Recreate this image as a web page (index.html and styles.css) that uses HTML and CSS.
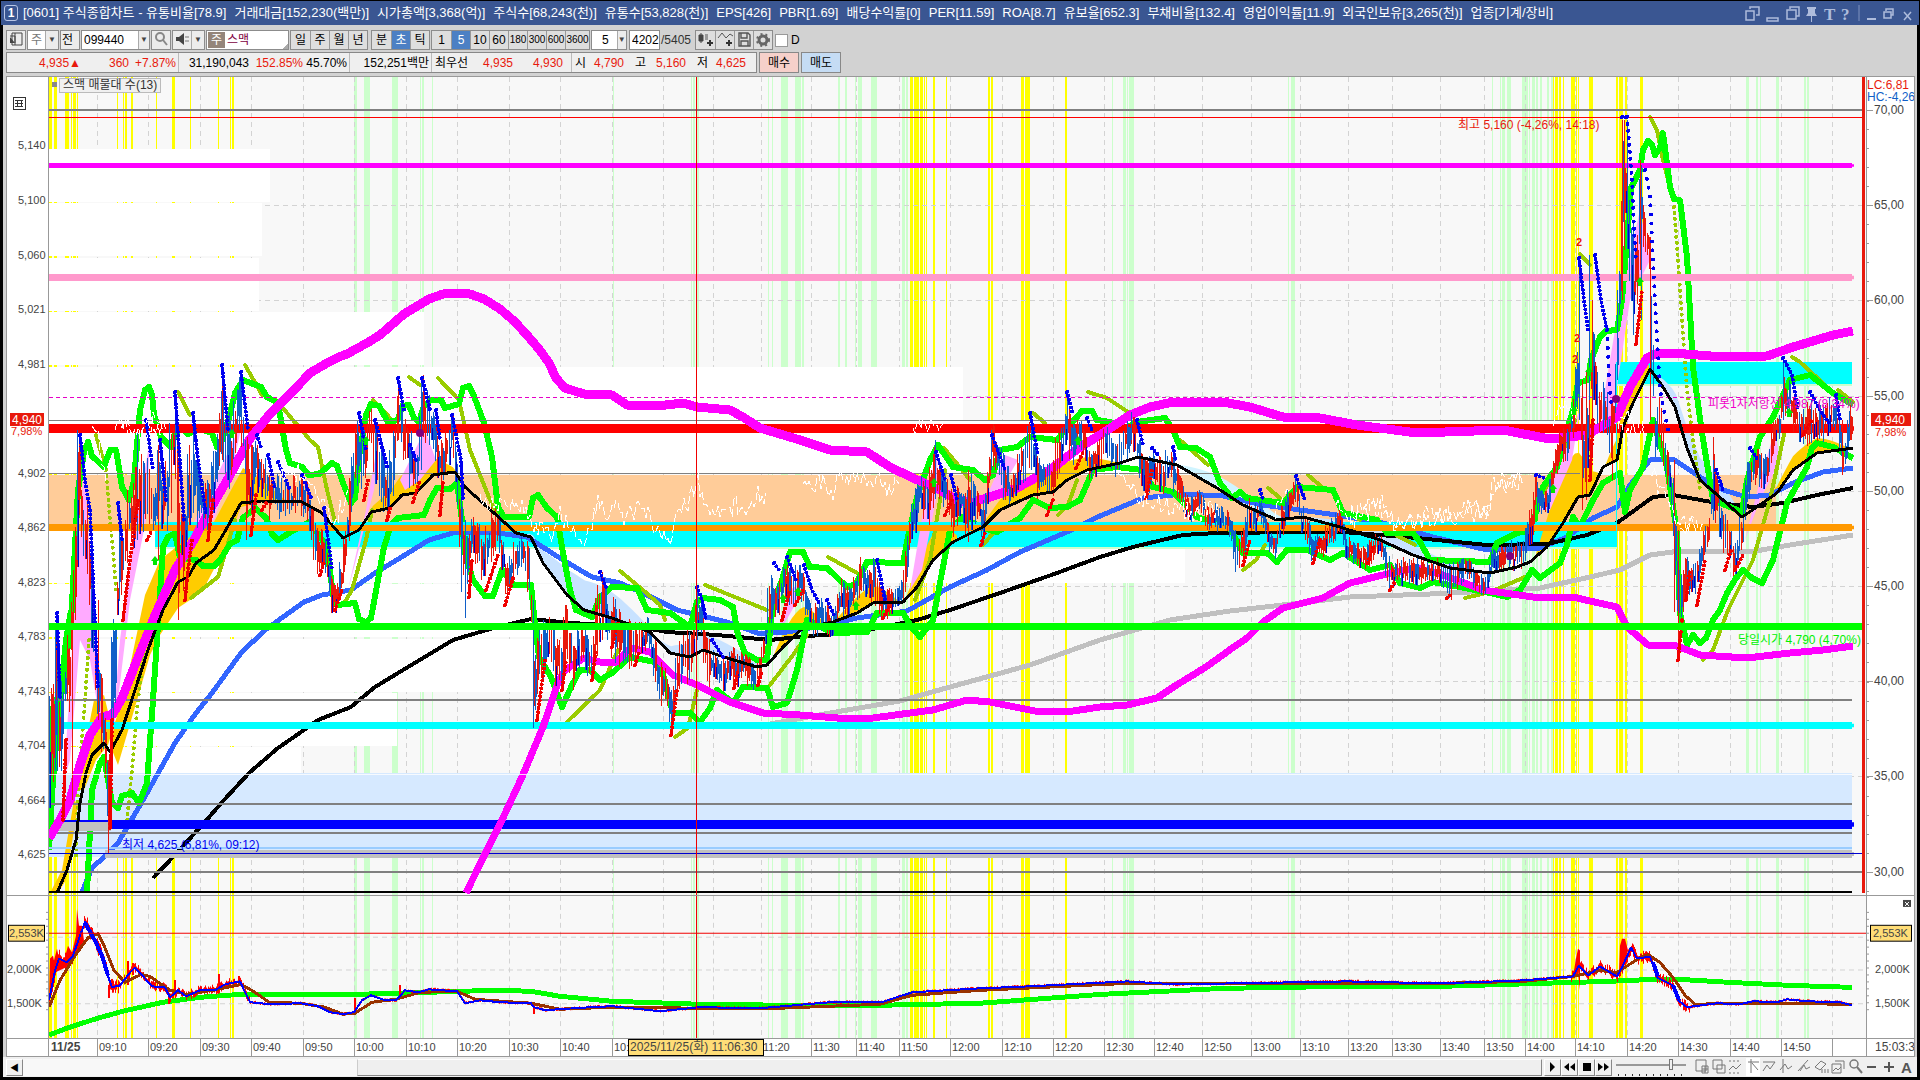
FILE: index.html
```html
<!DOCTYPE html>
<html lang="ko">
<head>
  <meta charset="UTF-8">
  <title>[0601] 주식종합차트</title>
  <link rel="stylesheet" href="styles.css">
</head>
<body>
  <header class="titlebar">
    <span class="win-no">1</span>
    <h1 class="title">
      <span>[0601] 주식종합차트 - 유통비율[78.9]</span>
      <span>거래대금[152,230(백만)]</span>
      <span>시가총액[3,368(억)]</span>
      <span>주식수[68,243(천)]</span>
      <span>유통수[53,828(천)]</span>
      <span>EPS[426]</span>
      <span>PBR[1.69]</span>
      <span>배당수익률[0]</span>
      <span>PER[11.59]</span>
      <span>ROA[8.7]</span>
      <span>유보율[652.3]</span>
      <span>부채비율[132.4]</span>
      <span>영업이익률[11.9]</span>
      <span>외국인보유[3,265(천)]</span>
      <span>업종[기계/장비]</span>
    </h1>
    <svg class="win-icons" width="172" height="20" viewBox="1744 3 172 20">
      <g fill="none" stroke="#aebcdc" stroke-width="1.5">
        <path d="M1751 9V7h9v8h-3M1747 11h8v9h-8zM1768 18h11v3h-11zM1791 9v-2h9v9h-3M1788 10h9v9h-9zM1887 11V9h7v6h-2M1885 12h7v6h-7zM1905 12l7 8M1912 12l-7 8"/>
        <path d="M1860 5v16" stroke="#7f92bf" stroke-width="1"/>
      </g>
      <path d="M1808 7h9v2h-1v4l2 3h-5v6h-1v-6h-5l2-3v-4h-1zM1868 18h9v2h-9z" fill="#aebcdc"/>
      <text class="win-glyph" x="1825" y="20">T</text>
      <text class="win-glyph" x="1842" y="20">?</text>
    </svg>
  </header>

  <main class="window">
    <div class="toolbar">
      <button class="tool" aria-label="패널"><svg width="16" height="16" viewBox="0 0 16 16"><path d="M4 2h10v12H4zM2 5h5v7M7 2v12" fill="none" stroke="#444"/><path d="M2 6l5 6H2z" fill="#444"/></svg></button>
      <div class="combo"><button class="wide">주</button><button class="drop" aria-label="종류">▼</button></div>
      <button class="tool">전</button>
      <div class="combo code"><input type="text" value="099440" aria-label="종목코드"><button class="drop" aria-label="종목목록">▼</button></div>
      <button class="tool" aria-label="검색"><svg width="16" height="16" viewBox="0 0 16 16"><circle cx="7" cy="6" r="4" fill="none" stroke="#888" stroke-width="2"/><path d="M10 9l4 5" stroke="#888" stroke-width="2"/></svg></button>
      <div class="combo"><button class="tool" aria-label="소리"><svg width="16" height="16" viewBox="0 0 16 16"><path d="M2 6h3l5-4v12l-5-4H2z" fill="#444"/><path d="M12 5v2M12 9v2M14 5v2M14 9v2" stroke="#777"/></svg></button><button class="drop" aria-label="소리 설정">▼</button></div>
      <div class="name-box"><span class="market">주</span><span class="stock">스맥</span></div>
      <div class="group"><button>일</button><button>주</button><button>월</button><button>년</button></div>
      <div class="group unit"><button>분</button><button class="on">초</button><button>틱</button></div>
      <div class="group"><button>1</button><button class="on">5</button><button>10</button><button>60</button><button class="long">180</button><button class="long">300</button><button class="long">600</button><button class="long last">3600</button></div>
      <div class="combo count"><input type="text" value="5" aria-label="주기"><button class="drop" aria-label="주기 선택">▼</button></div>
      <input class="bars" type="text" value="4202" aria-label="조회 봉수"><span class="total">/5405</span>
      <div class="group icons">
        <button aria-label="차트 추가"><svg width="17" height="17" viewBox="0 0 17 17"><path d="M2 4h4v6H2zM4 2v10" fill="#444" stroke="#444"/><path d="M8 3h3v6H8z" fill="#999"/><path d="M13 9v6M10 12h6" stroke="#333" stroke-width="2"/></svg></button>
        <button aria-label="지표 추가"><svg width="17" height="17" viewBox="0 0 17 17"><path d="M1 7l4-5 4 5 4-4 3 2" fill="none" stroke="#555"/><path d="M12 9v6M9 12h6" stroke="#333" stroke-width="2"/></svg></button>
        <button aria-label="저장"><svg width="17" height="17" viewBox="0 0 17 17"><path d="M3 2h9l2 2v11H3zM5 2v5h6V2M5 15v-5h7v5" fill="none" stroke="#555" stroke-width="1.4"/></svg></button>
        <button aria-label="설정"><svg width="17" height="17" viewBox="0 0 17 17"><circle cx="8" cy="9" r="4" fill="none" stroke="#666" stroke-width="3"/><circle cx="8" cy="9" r="6" fill="none" stroke="#666" stroke-width="2" stroke-dasharray="2 3"/></svg></button>
      </div>
      <label class="daily"><input type="checkbox">D</label>
    </div>

    <div class="quotes">
      <div class="quote-box">
        <div class="cell change"><b>4,935▲</b><b>360</b><b>+7.87%</b></div>
        <div class="cell volume"><span>31,190,043</span><b>152.85%</b><span>45.70%</span></div>
        <div class="cell amount">152,251백만</div>
        <div class="cell best"><span>최우선</span><b>4,935</b><b>4,930</b></div>
        <div class="cell ohl"><span>시</span><b>4,790</b><span>고</span><b>5,160</b><span>저</span><b>4,625</b></div>
      </div>
      <button class="buy">매수</button>
      <button class="sell">매도</button>
    </div>

    <section class="chart">
      <svg class="axis" id="left" viewBox="7 77 41 818" preserveAspectRatio="none"></svg>
      <div class="pane">
        <svg id="main" viewBox="48 77 1819 818" preserveAspectRatio="none"></svg>
        <span class="legend">스맥 매물대 수(13)</span>
      </div>
      <svg class="axis" id="right" viewBox="1867 77 47 818" preserveAspectRatio="none"></svg>
      <svg class="axis low" id="leftLow" viewBox="7 895 41 143" preserveAspectRatio="none"></svg>
      <svg class="low" id="volume" viewBox="48 895 1819 143" preserveAspectRatio="none"></svg>
      <svg class="axis low" id="rightLow" viewBox="1867 895 47 143" preserveAspectRatio="none"></svg>
      <svg class="times" id="times" viewBox="7 1038 1907 19" preserveAspectRatio="none"></svg>
    </section>

    <footer class="bottom">
      <button class="arrow" aria-label="왼쪽">◀</button>
      <div class="track"><div class="thumb"></div></div>
      <div class="play">
        <button aria-label="재생"><svg width="15" height="14"><path d="M5 2l5 5-5 5z"/></svg></button>
        <button aria-label="뒤로"><svg width="15" height="14"><path d="M7 3v8L2 7zM13 3v8L8 7z"/></svg></button>
        <button aria-label="정지"><svg width="15" height="14"><path d="M4 3h8v8H4z"/></svg></button>
        <button aria-label="앞으로"><svg width="15" height="14"><path d="M2 3v8l5-4zM8 3v8l5-4z"/></svg></button>
      </div>
      <div class="speed"><input type="range" value="80" aria-label="속도"></div>
      <svg class="tools" width="220" height="18" viewBox="1692 1057 220 18">
        <path d="M1746 1057h14v18h-14z" fill="#fff"/>
        <g fill="none" stroke="#777">
          <path d="M1696 1059h10v11h-10zM1702 1065h6v7h-6zM1705 1065v7M1702 1068h6M1713 1059h9v9h-9zM1717 1064h8v8h-8z"/>
          <path d="M1729 1060h12M1729 1072h12" stroke-dasharray="2 2"/>
          <path d="M1729 1069l4-4 3 3 5-5M1748 1061h11M1751 1058v14M1752 1062l6 7M1763 1061h12M1763 1070l4-6 3 4 5-7M1783 1058v14M1780 1069l5-6 3 5 4-3M1798 1070l10-11M1800 1070l4-6 2 4 4-2M1815 1066l6-6 5 3-6 6zM1822 1068v4M1825 1068v4M1828 1068v4M1832 1063h9v9h-9zM1835 1060h9v8M1833 1070l3-3 2 2 3-3"/>
          <circle cx="1854" cy="1063" r="4" stroke-width="1.5"/><path d="M1857 1066l5 6" stroke-width="2"/>
          <path d="M1867 1066h9M1884 1066h10M1889 1061v10" stroke="#555" stroke-width="2"/>
        </g>
        <text class="tool-a" x="1901" y="1072">A</text>
      </svg>
    </footer>
  </main>
  <script src="chart.js"></script>
</body>
</html>
```
FILE: styles.css
```css
* {
  box-sizing: border-box;
}
body {
  margin: 0;
  height: 100vh;
  display: flex;
  flex-direction: column;
  background: #000;
  padding: 1px 1px 3px 1px;
  font-family: "Liberation Sans", "Noto Sans CJK KR", sans-serif;
  font-size: 12px;
  line-height: 16px;
  overflow: hidden;
}
button, input {
  font: inherit;
  color: #000;
  margin: 0;
  padding: 0;
  border: 0;
  border-radius: 0;
}
svg {
  display: block;
}

/* title bar */
.titlebar {
  height: 24px;
  display: flex;
  align-items: center;
  background: #3a5692;
  color: #fff;
  padding: 0 4px 0 3px;
}
.win-no {
  width: 14px;
  height: 16px;
  line-height: 14px;
  border: 1px solid #b9c6e6;
  border-radius: 3px;
  text-align: center;
  font-weight: bold;
}
.title {
  flex: 1;
  display: flex;
  gap: 8px;
  margin: 0 0 0 5px;
  font-size: 13px;
  font-weight: normal;
  white-space: nowrap;
}
.win-glyph {
  font: bold 17px "Liberation Serif", serif;
  fill: #aebcdc;
}

.window {
  flex: 1;
  min-height: 0;
  margin: 0 2px;
  display: flex;
  flex-direction: column;
  background: #d2d2d2;
}

/* toolbar */
.toolbar {
  height: 27px;
  display: flex;
  align-items: center;
  padding: 3px 0 0 3px;
  gap: 1px;
}
.toolbar button {
  background: #ececec;
  height: 18px;
  line-height: 18px;
  overflow: hidden;
}
.tool, .combo, .group, .name-box, .bars {
  height: 20px;
  border: 1px solid #8c8c8c;
  display: flex;
  background: #fff;
}
.toolbar .tool {
  width: 20px;
  height: 20px;
  padding: 0 1px;
}
.combo .tool {
  width: 18px;
  height: 18px;
  border: 0;
}
.toolbar .wide {
  width: 17px;
  background: #fff;
  color: #777;
}
.toolbar .drop {
  width: 13px;
  border-left: 1px solid #aaa;
  font-size: 8px;
  color: #444;
}
.combo.code {
  width: 69px;
}
.combo input, .bars {
  width: 100%;
  min-width: 0;
  padding-left: 2px;
}
.name-box {
  width: 83px;
  align-items: center;
  padding-left: 1px;
  background: linear-gradient(135deg, #fff 94%, #aaa 94%);
}
.market {
  width: 17px;
  line-height: 16px;
  text-align: center;
  background: #94857a;
  color: #fff;
}
.stock {
  margin-left: 2px;
  color: #800040;
}
.group button {
  width: 19px;
  background: #dedede;
  border-left: 1px solid #999;
  display: flex;
  justify-content: center;
}
.group button:first-child {
  border-left: 0;
}
.toolbar .group .on {
  background: #4c80c4;
  color: #fff;
}
.group .long {
  font-size: 10px;
}
.group .last {
  width: 24px;
}
.group.unit {
  margin: 0 0 0 2px;
}
.icons button {
  width: 19px;
}
.combo.count {
  width: 36px;
}
.count input {
  text-align: center;
}
.bars {
  width: 31px;
  margin-left: 1px;
}
.total {
  width: 33px;
  color: #333;
}
.daily {
  display: flex;
  align-items: center;
  gap: 3px;
}
.daily input {
  appearance: none;
  width: 13px;
  height: 13px;
  margin-left: 1px;
  background: #fff;
  border: 1px solid #999;
}

/* quotes */
.quotes {
  height: 24px;
  display: flex;
  gap: 2px;
  padding: 0 0 3px 3px;
}
.quote-box {
  width: 751px;
  display: grid;
  grid-template-columns: 172px 171px 82px 140px 1fr;
  border: 1px solid #888;
  background: #efefef;
}
.quotes b {
  font-weight: normal;
  color: #e8190c;
}
.cell {
  display: grid;
  align-items: center;
  text-align: right;
  padding-right: 2px;
  border-right: 1px solid #bbb;
  white-space: nowrap;
}
.cell:last-child {
  border: 0;
}
.change {
  grid-template-columns: 74px 48px 1fr;
}
.volume {
  grid-template-columns: 70px 54px 1fr;
}
.best {
  grid-template-columns: 36px 45px 50px;
}
.ohl {
  grid-template-columns: 14px 38px 22px 40px 22px 38px;
}
.buy, .sell {
  width: 40px;
  border: 1px solid #888;
  background: #f6d0ca;
}
.sell {
  background: #c5dcf4;
}

/* chart */
.chart {
  flex: 1;
  min-height: 0;
  margin: 0 2px 0 3px;
  border: 1px solid #999;
  border-width: 1px 1px 0 1px;
  display: grid;
  grid-template-columns: 41px 1fr 47px;
  grid-template-rows: 818fr 143fr 19px;
  background: #f8f8f8;
}
.chart svg {
  width: 100%;
  height: 100%;
  min-height: 0;
  overflow: hidden;
}
.pane {
  position: relative;
  min-height: 0;
}
.legend {
  position: absolute;
  left: 11px;
  top: 1px;
  padding: 0 3px;
  line-height: 13px;
  background: #f0f0f0;
  border: 1px solid #bbb;
  color: #333;
}
.axis {
  background: #fff;
}
.chart .low {
  border-top: 1px solid #999;
}
.times {
  grid-column: 1 / 4;
  background: #fff;
}
.chart text {
  font-size: 12px;
  fill: #444;
}
.chart .small {
  font-size: 11px;
}
.chart .white {
  fill: #fff;
}
.chart .red {
  fill: #e8190c;
}
.chart .blue {
  fill: #0000f0;
}
.chart .sky {
  fill: #105fc8;
}
.chart .green {
  fill: #00f000;
}
.chart .pink {
  fill: #f000c8;
}
.chart .day {
  font-weight: bold;
}

/* bottom bar */
.bottom {
  height: 20px;
  display: flex;
  align-items: center;
  padding: 0 5px 0 3px;
  background: #f0f0f0;
}
.bottom button {
  width: 17px;
  height: 17px;
  font-size: 9px;
  background: #f0f0f0;
  border: 1px solid;
  border-color: #fff #888 #888 #fff;
}
.track {
  flex: 1;
  background: #f8f8f8;
}
.thumb {
  margin-left: 22%;
  height: 17px;
  background: #efefef;
  border: 1px solid;
  border-color: #fff #888 #888 #ccc;
}
.play {
  display: flex;
  margin-left: 2px;
}
.speed {
  width: 72px;
  margin: 0 4px;
  height: 17px;
  background: repeating-linear-gradient(90deg, #333 0 1px, transparent 1px 7px) 2px 15px / 68px 2px no-repeat;
}
.speed input {
  appearance: none;
  display: block;
  width: 70px;
  height: 11px;
  background: linear-gradient(#999, #999) 0 5px / 100% 2px no-repeat;
}
.speed input::-webkit-slider-thumb {
  appearance: none;
  width: 4px;
  height: 11px;
  background: #f0f0f0;
  border: 1px solid #777;
}
.tool-a {
  font-size: 15px;
  font-weight: bold;
  fill: #555;
}
```
FILE: chart.js
```js
const NS = 'http://www.w3.org/2000/svg';
const $ = id => document.getElementById(id);

function add(parent, tag, attrs, text) {
  const el = document.createElementNS(NS, tag);
  for (const k in attrs) el.setAttribute(k, attrs[k]);
  if (text) el.textContent = text;
  parent.appendChild(el);
  return el;
}
function rect(p, x1, y1, x2, y2, fill) {
  add(p, 'rect', { x: x1, y: y1, width: x2 - x1, height: y2 - y1, fill });
}
function line(p, x1, y1, x2, y2, stroke, w = 1, extra = {}) {
  add(p, 'line', { x1, y1, x2, y2, stroke, 'stroke-width': w, 'shape-rendering': 'crispEdges', ...extra });
}
function curve(p, pts, stroke, w, extra = {}) {
  add(p, 'polyline', { points: pts, fill: 'none', stroke, 'stroke-width': w, 'stroke-linejoin': 'round', 'shape-rendering': 'crispEdges', ...extra });
}
function text(p, x, y, s, cls = '') {
  add(p, 'text', { x, y, class: cls }, s);
}
const parse = s => s.trim().split(/\s+/).map(t => t.split(',').map(Number));
const join = pts => pts.map(p => p.join(',')).join(' ');
// value of a polyline at x
function at(pts, x) {
  for (let i = 1; i < pts.length; i++) {
    if (x <= pts[i][0]) {
      const [a, b] = [pts[i - 1], pts[i]];
      const t = (x - a[0]) / (b[0] - a[0] || 1);
      return a.slice(1).map((v, k) => v + (b[k + 1] - v) * t);
    }
  }
  return pts[pts.length - 1].slice(1);
}
let seed = 11;
function rnd() {
  seed = (seed * 16807) % 2147483647;
  return seed / 2147483647;
}

const main = $('main'), vol = $('volume');
const GRID = [97, 148, 200, 251, 303, 354, 406, 457, 509, 560, 612, 663, 713, 761, 811, 856, 899, 950, 1002, 1053, 1104, 1154, 1202, 1251, 1300, 1348, 1392, 1440, 1484, 1525, 1575, 1627, 1678, 1730, 1781, 1832];
const YELLOW = '49,52 54,57 65,69 71,72 73,76 77,78 117,118 123,124 125,127 131,133 156,157 172,175 190,191 218,219 230,231 232,234 910,913 914,919 920,923 924,925 926,927 933,935 946,947 988,990 991,993 1021,1024 1025,1030 1065,1067 1553,1554 1555,1558 1559,1561 1563,1564 1571,1575 1576,1577 1578,1579 1589,1593 1616,1618 1619,1623 1625,1627 1640,1643';
const GREEN = '354,357 364,370 392,398 420,421 422,424 432,433 613,614 691,692 693,695 697,699 768,769 772,773 781,788 795,801 802,804 838,840 845,847 855,856 858,862 871,877 902,905 906,908 1112,1113 1123,1126 1127,1128 1129,1134 1288,1289 1291,1295 1492,1493 1500,1501 1502,1505 1507,1511 1522,1528 1529,1530 1532,1535 1536,1538 1540,1542 1547,1549 1551,1553 1746,1749 1756,1758 1760,1761 1776,1779 1804,1806 1807,1809';

function background(p, y1, y2, rows) {
  for (const [a, b] of parse(GREEN)) rect(p, a, y1, b, y2, '#ccffcc');
  for (const [a, b] of parse(YELLOW)) rect(p, a, y1, b, y2, '#ffff00');
  for (const x of GRID) line(p, x + .5, y1, x + .5, y2, '#d3d3d3', 1, { 'stroke-dasharray': '5 4' });
  for (const y of rows) line(p, 49, y + .5, 1866, y + .5, '#d3d3d3', 1, { 'stroke-dasharray': '5 4' });
}
background(main, 77, 895, [205, 300, 396, 491, 586, 681, 776, 872]);

// volume profile
[[148, 270], [202, 262], [257, 259], [311, 424], [366, 963], [420, 1578], [529, 1185], [583, 620], [638, 620], [692, 397]].forEach(([y, x]) => rect(main, 49, y + 1, x, y + 54, '#fff'));
rect(main, 49, 747, 301, 773, '#fff');
rect(main, 49, 475, 1776, 528, '#ffcc99');
rect(main, 49, 773, 1852, 857, '#d6e9ff');
rect(main, 155, 531, 1617, 547, '#00ffff');
rect(main, 1616, 362, 1852, 385, '#00ffff');
line(main, 155, 548, 1617, 548, '#ccffcc', 2);
line(main, 1616, 385, 1852, 385, '#ccffcc', 2);

// moving averages
const fast = parse('57,893 67,870 76,840 80,803 86,773 92,755 104,743 110,752 122,730 135,690 149,647 163,610 178,582 188,577 196,563 214,550 224,533 241,503 261,501 302,502 322,513 343,538 359,530 371,512 390,508 402,495 416,493 433,475 455,472 465,487 494,513 516,533 531,537 543,563 567,595 584,610 612,618 650,632 670,653 690,657 703,650 727,658 757,667 767,665 783,647 803,628 833,622 857,613 873,603 903,602 917,587 933,560 953,542 983,527 1000,510 1033,495 1053,492 1067,480 1087,470 1120,463 1138,457 1177,465 1217,488 1243,505 1277,520 1303,517 1340,527 1380,540 1413,555 1450,568 1490,573 1517,567 1530,562 1547,547 1563,523 1578,497 1590,495 1603,467 1617,460 1623,427 1633,403 1650,369 1663,387 1675,407 1687,448 1700,480 1723,500 1742,517 1757,507 1777,493 1793,470 1817,453 1853,448');
function ribbon(a, b, h, fill) {
  const top = [], low = [];
  for (let x = a; x <= b; x += 4) {
    const y = at(fast, x)[0];
    top.push(x + ',' + (y - h * Math.sin(Math.PI * (x - a) / (b - a))));
    low.unshift(x + ',' + y);
  }
  add(main, 'polygon', { points: top.concat(low).join(' '), fill });
}
add(main, 'polygon', { points: '78,790 86,740 94,700 104,695 110,720 112,750 118,765 140,690 150,655 160,635 178,608 202,592 224,550 241,507 262,502 285,500 262,480 243,468 230,492 214,522 185,540 160,560 145,595 125,690 108,745 96,760 84,790', fill: '#ffcc00' });
add(main, 'polygon', { points: '50,893 62,870 74,800 78,805 66,880 58,893', fill: '#ffcc00' });
ribbon(365, 460, 22, '#ffcc00'); ribbon(525, 655, 30, '#c8e2ff'); ribbon(655, 765, 16, '#c8e2ff');
ribbon(772, 825, 22, '#ffcc00'); ribbon(835, 900, 18, '#ffcc00'); ribbon(905, 960, 26, '#ffcc00'); ribbon(975, 1120, 20, '#ffcc00');
ribbon(1175, 1290, 14, '#d0f4ff'); ribbon(1300, 1480, 10, '#c8e2ff'); ribbon(1535, 1600, 52, '#ffcc00');
ribbon(1605, 1652, 30, '#ffcc00'); ribbon(1652, 1745, 22, '#c8e2ff'); ribbon(1765, 1850, 16, '#ffcc00');
for (const pts of ['64,780 75,600 84,470 92,580 103,740 90,660 80,640 70,760', '112,740 120,640 136,520 150,440 146,520 130,600 118,700', '190,530 215,480 243,420 232,470 214,520', '348,590 366,510 380,430 374,490 356,560', '400,480 425,430 436,460 420,480 405,490', '775,640 790,590 805,580 795,605', '910,590 925,500 938,450 936,500 922,570', '985,500 1005,455 1018,460 995,500', '1540,510 1560,455 1580,410 1572,460 1550,510', '1600,420 1620,300 1640,210 1650,260 1630,300 1612,420', '1745,540 1760,480 1775,430 1780,460 1760,500'])
  add(main, 'polygon', { points: pts, fill: '#ffaaff' });
curve(main, '770,724 830,713 900,701 950,687 1030,665 1100,640 1170,620 1230,611 1300,603 1350,597 1430,594 1490,591 1540,588 1590,577 1620,570 1650,555 1680,551 1750,552 1790,545 1853,535', '#c0c0c0', 5);
curve(main, '82,892 92,868 104,857 118,843 143,800 175,743 196,713 212,693 241,653 265,630 304,602 322,595 351,590 375,573 400,558 429,540 453,533 490,532 527,537 563,560 592,577 620,583 643,593 677,610 727,622 760,634 787,632 827,625 857,618 907,611 950,587 987,570 1020,552 1067,532 1100,516 1143,498 1183,494 1223,496 1263,505 1337,515 1383,523 1433,537 1487,550 1540,548 1567,537 1593,518 1617,507 1630,485 1650,460 1673,459 1700,477 1723,490 1747,497 1770,495 1793,483 1823,472 1853,468', '#3366ff', 5);
curve(main, '153,878 173,857 204,823 224,800 249,773 278,748 304,730 318,720 351,707 375,687 408,667 453,640 490,629 531,619 571,623 640,627 667,632 717,635 770,640 807,636 853,633 917,620 950,610 1000,593 1057,573 1100,557 1133,547 1183,535 1217,533 1303,532 1343,532 1417,538 1487,545 1547,544 1587,535 1617,523 1653,497 1673,495 1717,503 1753,507 1783,503 1817,495 1853,488', '#000', 4);

// olive trailing lines
for (const s of ['245,365 262,395', '276,400 310,440 318,447 327,490 337,530', '343,605 352,590 366,540 372,510', '178,392 190,415', '191,598 218,577 235,520', '438,378 459,400 470,450 490,500 500,520', '409,377 420,385', '373,400 392,420', '96,435 106,470', '566,723 600,690 618,650', '620,571 643,590 660,605 665,620', '675,737 688,728 697,690', '705,585 767,610', '770,685 793,655 807,635', '828,557 857,573', '944,448 958,465 970,480', '983,545 1000,525', '1033,413 1045,423', '915,600 930,560 945,470', '1058,515 1068,505 1077,480', '1088,392 1107,398 1128,412', '1180,440 1208,465', '1243,570 1256,560 1265,545', '1268,488 1280,498', '1308,475 1322,487', '1340,510 1360,520', '1396,535 1415,545', '1465,598 1490,592 1525,577', '1540,500 1560,460 1575,420', '1580,254 1590,265', '1650,117 1657,130 1663,160 1673,200', '1703,660 1713,650 1728,610 1753,560 1770,500 1785,430', '1792,357 1800,362 1825,385', '1838,390 1853,402'])
  curve(main, s, '#99cc00', 4, { 'stroke-linecap': 'round' });
const dots = (s, color, gap = 6) => curve(main, s, color, 4, { 'stroke-linecap': 'round', 'stroke-dasharray': '0 ' + gap });
dots('106,470 110,520 113,550 116,590', '#99cc00');
dots('89,640 85,700 78,790 76,860', '#99cc00');
dots('127,820 132,770 137,710 145,640', '#99cc00');
dots('1674,207 1678,260 1682,320 1687,390 1693,440 1700,490', '#99cc00');

// green envelopes
const env = s => curve(main, s, '#00ff00', 6);
env('49,760 54,700 61,698 71,623 78,490 84,452 88,442 92,456 104,467 110,450 116,450 119,468 122,487 129,500 134,480 140,410 145,390 149,387 152,395 154,415 161,437 171,447 176,432 182,429 188,434 200,429 212,433 217,447 222,440 229,418 235,393 243,380 261,387 267,397 278,403 286,450 290,463 302,467 309,475 319,474 332,463 337,466 343,483 351,503 355,498 359,457 366,415 371,404 379,406 388,422 398,420 402,406 409,405 414,418 419,422 424,406 431,400 441,400 445,408 459,404 463,388 469,386 474,396 484,423 492,457 498,507 504,517 529,517 533,498 538,495 547,508 557,517 563,553 570,590 576,610 592,617 600,597 612,587 637,588 647,610 670,613 690,627 697,602 703,598 720,600 733,607 738,635 745,653 757,660 767,660 773,603 782,580 790,552 803,552 810,567 827,568 847,587 856,584 867,562 903,563 908,537 917,497 930,460 938,445 953,467 973,470 985,480 993,475 1000,450 1017,447 1030,437 1057,440 1065,430 1077,417 1082,411 1092,411 1097,420 1110,422 1123,430 1137,422 1165,418 1173,430 1180,447 1196,448 1210,457 1220,483 1232,498 1240,492 1247,498 1283,503 1297,487 1333,490 1343,513 1377,520 1387,533 1413,533 1420,542 1430,560 1490,562 1497,543 1517,533 1533,530 1537,505 1543,487 1557,467 1567,430 1573,410 1578,383 1588,380 1591,360 1600,337 1606,331 1617,330 1622,300 1627,240 1631,188 1640,170 1643,150 1648,141 1652,145 1655,155 1660,148 1663,133 1670,187 1674,199 1680,200 1687,257 1693,367 1702,433 1713,500 1730,507 1742,512 1747,480 1760,437 1773,417 1790,380 1810,375 1833,393 1853,405');
env('49,850 53,780 60,700 66,640 71,610');
env('87,892 92,790 100,763 104,757 112,803 118,808 122,796 132,793 139,803 147,783 153,700 157,640 163,547 168,537 175,533 180,558 196,560 203,566 214,566 220,560 230,544 237,540 243,518 255,508 266,518 272,534 278,540 294,530 310,522 327,547 333,595 337,605 355,603 359,619 366,622 371,618 378,580 384,547 391,525 398,518 424,515 430,500 437,488 450,489 457,483 462,520 465,553 473,580 485,596 493,596 502,570 514,585 531,585 535,625 539,657 551,677 562,707 572,685 580,670 590,670 600,680 612,673 630,657 660,663 673,713 690,713 700,722 710,708 717,690 733,703 743,687 767,688 773,707 787,703 797,670 807,620 833,633 867,632 877,613 903,613 912,628 920,637 933,620 943,567 950,530 963,517 980,527 997,532 1020,518 1033,500 1050,508 1067,507 1080,500 1093,470 1117,467 1142,470 1153,487 1173,492 1197,517 1230,528 1243,553 1267,553 1277,562 1287,550 1307,550 1330,560 1343,553 1370,570 1390,565 1400,583 1420,588 1433,582 1460,587 1490,593 1507,597 1520,590 1532,570 1540,578 1560,563 1567,545 1573,517 1580,527 1593,500 1603,483 1620,473 1625,512 1630,490 1643,467 1653,420 1667,467 1677,533 1680,613 1687,645 1693,635 1700,643 1706,638 1713,620 1720,610 1727,593 1736,578 1743,570 1752,578 1762,583 1773,560 1787,503 1797,485 1807,467 1812,448 1817,443 1833,447 1853,458');

// fixed price levels
const lv = (y, c, w, x1 = 49, x2 = 1852) => {
  line(main, x1, y, x2, y, c, w);
  if (w > 3 && x2 === 1852) rect(main, x2, y - w / 4, x2 + 2, y + w / 4, c);
};
lv(110, '#808080', 2, 49, 1863); lv(117.5, '#ff0000', 1, 49, 1863);
lv(165.5, '#ff00ff', 5); lv(277.5, '#ff99cc', 7);
line(main, 49, 397.5, 1863, 397.5, '#e600c8', 1, { 'stroke-dasharray': '4 3' });
lv(420.5, '#808080', 1, 49, 1570); lv(473.5, '#808080', 1, 49, 1580);
lv(428.5, '#ff0000', 9); lv(527.5, '#ff9900', 7);
line(main, 155, 523.5, 1617, 523.5, '#00ffff', 3); line(main, 1616.5, 362, 1616.5, 547, '#00ffff', 1);
lv(700, '#808080', 2); lv(725.5, '#00ffff', 7, 62);
lv(804, '#808080', 2); lv(826.5, '#c0c0c0', 9, 58, 111); lv(821, '#0000ff', 2, 60, 1852);
lv(824.5, '#0000ff', 9, 111); lv(833, '#808080', 2); lv(848, '#99ccff', 2);
lv(854, '#c0c0c0', 8, 105); lv(872, '#808080', 2, 49, 1863); lv(892, '#000', 2);
line(main, 49, 853.5, 1863, 853.5, '#0000d0', 1);

// bands
curve(main, '49,838 60,820 70,800 80,765 90,735 102,717 113,714 122,698 141,650 153,620 175,570 194,540 208,513 229,477 249,440 269,415 294,390 310,373 327,363 339,357 347,354 367,343 380,335 404,314 429,299 443,294 456,293 470,294 484,299 500,309 514,321 527,335 539,349 549,363 556,378 565,388 584,394 612,395 627,405 657,406 683,403 697,407 730,410 743,417 760,428 800,440 830,450 867,452 890,467 913,478 940,490 955,499 970,503 987,498 1017,488 1050,470 1080,447 1100,435 1130,415 1150,407 1173,402 1223,402 1250,407 1283,417 1320,418 1357,425 1417,433 1503,430 1550,439 1587,435 1600,427 1617,417 1630,387 1647,358 1655,354 1673,353 1723,357 1767,356 1793,347 1833,335 1853,331', '#ff00ff', 9);
curve(main, '466,893 482,860 502,820 522,777 543,727 559,680 565,670 584,658 604,663 617,662 630,648 650,652 673,675 697,685 730,702 763,713 800,715 850,719 873,718 910,713 933,710 967,700 990,702 1040,712 1073,711 1100,707 1127,705 1157,698 1175,686 1206,667 1231,649 1247,638 1263,622 1283,608 1323,598 1350,583 1383,575 1417,568 1443,575 1483,590 1533,597 1573,597 1590,601 1617,607 1627,627 1648,645 1677,646 1700,655 1747,658 1790,653 1823,650 1853,646', '#ff00ff', 7);

// candles: x, high, low
const price = parse('49,700,830 52,650,790 56,615,780 60,690,815 65,640,740 70,610,700 74,500,640 77,430,590 80,440,560 84,470,590 88,480,600 92,560,660 96,640,720 100,650,750 104,700,760 108,760,850 112,600,760 115,590,740 118,500,620 122,520,600 126,480,590 130,470,560 136,430,530 142,445,540 148,460,540 154,450,560 158,440,520 164,460,540 170,420,520 175,395,480 178,470,590 184,490,590 190,420,520 194,440,510 200,470,540 206,480,530 212,450,520 218,420,500 222,365,460 226,420,480 231,410,500 236,385,440 241,375,450 246,430,520 250,450,540 256,430,490 262,450,500 270,470,520 280,480,520 290,480,520 300,475,510 306,480,530 314,510,560 319,530,580 325,520,590 330,570,610 336,580,610 342,550,600 348,470,560 354,430,500 359,420,480 364,430,500 369,395,460 376,420,490 386,460,520 394,430,490 398,380,440 403,410,460 410,430,490 416,450,500 421,370,450 427,390,450 433,400,450 439,430,500 446,430,470 452,410,460 457,440,510 461,500,580 465,520,590 472,510,560 480,530,580 488,520,570 494,500,550 500,520,560 506,560,600 514,540,580 522,530,570 530,550,600 533,620,720 537,630,700 542,620,680 550,620,670 558,640,700 566,600,680 574,630,690 582,620,670 590,640,690 596,590,660 602,575,630 608,600,650 614,600,660 622,620,670 630,620,670 640,625,655 648,620,650 655,640,690 660,660,710 666,670,710 671,680,735 676,650,700 682,640,680 690,620,680 696,590,640 700,590,640 706,630,680 714,650,690 724,660,690 734,650,685 744,650,680 754,670,690 762,645,675 768,570,640 774,580,620 780,580,610 786,555,600 792,575,605 798,560,600 804,575,610 812,610,640 822,600,630 832,615,635 840,580,615 848,590,620 856,575,600 860,555,595 866,575,600 873,555,605 880,590,620 888,590,615 898,590,605 904,560,600 909,510,560 914,490,540 919,470,520 925,460,520 930,470,530 934,440,500 940,460,500 948,480,510 954,485,540 960,490,510 967,490,540 972,470,530 978,490,520 983,510,545 988,460,500 991,420,460 997,440,480 1004,460,500 1012,480,505 1020,445,490 1026,430,480 1031,410,460 1036,450,500 1044,460,495 1052,470,500 1056,430,480 1062,420,460 1067,395,450 1072,430,470 1078,410,440 1084,430,470 1090,450,480 1100,430,470 1108,430,460 1116,440,475 1124,430,460 1131,410,450 1136,430,460 1142,455,490 1146,460,500 1152,450,480 1160,460,500 1168,450,480 1174,460,490 1180,480,510 1190,500,520 1200,490,510 1208,510,530 1216,500,530 1222,510,530 1230,515,540 1236,540,570 1242,530,560 1248,500,540 1254,500,530 1260,500,520 1266,520,545 1274,540,560 1280,510,540 1288,490,520 1295,480,500 1301,505,530 1308,520,550 1314,540,565 1322,530,555 1332,520,550 1340,510,530 1346,540,565 1354,540,560 1364,550,570 1372,540,560 1380,530,550 1388,560,590 1396,560,585 1406,560,580 1418,560,585 1430,565,580 1440,560,580 1450,565,600 1458,560,585 1468,560,575 1476,570,590 1486,580,592 1492,545,580 1500,550,570 1510,530,570 1518,545,570 1526,530,560 1532,490,540 1535,475,520 1540,490,510 1547,490,515 1554,440,490 1560,430,460 1567,430,460 1573,390,440 1576,350,400 1578,340,410 1579,260,400 1582,420,500 1586,400,490 1590,350,440 1593,300,400 1598,370,430 1604,380,430 1610,410,470 1614,370,440 1617,290,400 1620,230,330 1622,120,260 1625,140,220 1628,170,290 1632,250,310 1636,230,320 1640,160,260 1645,190,280 1649,220,290 1651,280,400 1655,400,460 1660,400,440 1664,430,480 1668,440,500 1673,460,540 1678,540,640 1681,560,620 1686,550,600 1692,560,600 1698,550,590 1703,530,560 1708,520,550 1713,440,520 1718,490,530 1724,510,560 1730,530,560 1735,540,580 1742,500,550 1747,450,510 1752,460,490 1757,440,480 1762,450,500 1768,450,480 1774,410,450 1780,400,440 1783,370,420 1790,380,430 1797,410,440 1803,410,450 1809,400,440 1815,410,440 1822,400,440 1830,400,430 1836,410,430 1843,440,475 1850,410,450');
for (let x = 49; x < 1852; x += 2) {
  const [h, l] = at(price, x);
  const a = h - 4 + (l - h) * rnd() * .45, b = l + 4 - (l - h) * rnd() * .45;
  const color = Math.floor(x / 5 + rnd() * 2) % 2 ? '#e8190c' : '#105fc8';
  line(main, x + .5, a, x + .5, b, color, 1);
  if (rnd() > .3) line(main, x + 1, a + (b - a) * .25 * rnd(), x + 1, b - (b - a) * .25, color, 2);
  if (rnd() > .8) line(main, x + 1.5, (a + b) / 2, x + 1.5, b, '#0000c8', 1);
}
for (const [x, y1, y2] of parse('56,612,700 72,612,800 77,430,560 98,600,720 108,760,853 137,430,540 158,445,560 175,392,450 178,480,620 193,412,500 222,365,460 241,372,420 246,450,540 398,378,440 421,378,470 461,480,592 465,520,618 533,600,728 602,572,640 671,690,735 697,587,640 860,557,590 934,447,490 968,470,542 983,500,545 991,430,470 1031,413,470 1067,392,440 1131,412,440 1235,530,572 1295,476,500 1579,256,420 1582,380,510 1586,370,500 1589,255,400 1592,300,440 1612,400,480 1617,290,380 1622,120,300 1624,120,250 1627,120,230 1633,220,335 1640,160,270 1641,165,320 1650,260,420 1674,460,612 1678,530,660 1713,460,520 1783,358,420 1842,420,475 1850,405,440'))
  line(main, x + .5, y1, x + .5, y2, x % 2 ? '#105fc8' : '#e8190c', 1);

curve(main, join(fast), '#000', 3);

for (const s of ['57,613 60,700', '80,435 85,480 90,510 98,690', '118,503 122,540', '146,420 153,470', '160,440 166,500', '175,392 184,520', '193,413 198,460 206,515', '222,365 228,430', '241,372 248,430', '257,435 262,450', '268,455 275,490', '278,462 290,490', '302,475 312,500', '324,508 332,570', '359,413 366,450', '375,420 388,470', '398,378 404,410', '410,445 416,460', '422,378 430,410', '436,410 440,440', '452,415 461,460 463,500', '600,572 607,590', '697,587 702,600 706,620', '712,640 725,660', '774,563 779,570', '787,557 796,580', '804,565 812,590 820,605', '827,600 834,615', '877,560 885,600', '936,452 945,480', '951,475 957,500', '992,435 1005,470', '1030,413 1038,455', '1067,392 1073,415', '1087,418 1092,430', '1137,420 1143,445', '1152,448 1158,455', '1173,447 1176,462', '1260,490 1263,500', '1296,476 1305,500', '1536,475 1544,478', '1579,258 1584,300 1588,330', '1595,255 1601,300 1607,330', '1622,117 1628,117', '1716,470 1723,490', '1783,358 1792,375 1798,410', '1810,392 1820,410 1830,425', '1836,395 1840,420', '1750,448 1758,460'])
  dots(s, '#0000f0', 4);
dots('1607,330 1609,380 1612,410', '#0000f0', 9);
dots('1627,117 1632,180 1634,230 1636,260', '#0000f0', 7);
dots('1645,170 1650,195 1652,240 1656,320 1660,390 1668,430', '#0000f0', 9);
for (const s of ['66,740 63,820', '112,720 110,830', '123,620 130,560 138,500', '147,540 152,530', '185,600 188,570 192,540', '208,540 213,500', '251,535 256,495', '262,510 268,500', '320,575 325,560', '335,610 342,590', '364,500 368,480', '387,520 391,505', '413,502 420,480', '440,515 443,480', '469,597 472,560', '486,590 498,555', '505,605 514,575', '537,720 545,660', '562,690 566,660', '592,680 596,650', '612,647 618,620', '635,665 640,650', '671,735 677,690', '734,688 738,670', '758,685 762,670', '782,620 790,590', '795,605 803,590', '883,618 890,605', '945,515 952,500', '981,545 986,530', '1047,515 1053,500', '1076,468 1084,450', '1146,498 1152,470', '1243,565 1250,540', '1313,563 1320,540', '1368,563 1374,545', '1390,590 1396,580', '1447,598 1452,594', '1590,480 1593,420', '1636,344 1642,290', '1678,660 1682,620', '1686,600 1690,570', '1697,605 1705,560', '1725,570 1731,550', '1735,570 1743,555', '1803,435 1812,420'])
  dots(s, '#f00000', 4);

// white overlay line
for (const s of ['92,422 98,440 104,470 108,500', '115,430 125,420 128,440 150,435 155,410 165,440', '118,420 135,432 150,425 168,432', '280,480 300,470 322,500 335,520 350,490', '480,500 502,507 522,502 535,527 551,537 561,513 575,535 588,537 598,497 607,515 617,500 623,520 640,508 648,510 658,535 672,535 677,508 690,500 697,478 707,515 720,515 737,505 752,510 757,495 765,495 768,475', '803,475 808,485 820,480 833,495 836,475 855,475 865,478 880,480 884,492 900,480', '913,435 920,425 945,425', '1117,475 1143,500 1180,510 1200,512 1220,508', '1275,510 1290,490', '1336,500 1350,520 1370,510 1380,497 1390,525 1430,515 1460,515 1470,500 1490,515 1492,480 1510,480 1520,475', '1350,515 1370,505 1400,525 1460,510 1488,515 1493,490 1525,480', '1553,430 1562,400 1575,420', '1618,430 1628,410 1645,430', '1620,425 1630,435 1648,425', '1650,470 1660,490 1680,525 1705,525', '1680,530 1700,522']) {
  const pts = parse(s);
  let d = '';
  for (let x = pts[0][0]; x < pts[pts.length - 1][0]; x += 2) d += x + ',' + Math.round(at(pts, x)[0] + (rnd() - .5) * 20) + ' ';
  curve(main, d, '#fff', 1, { 'stroke-dasharray': '8 3' });
}
for (const [x, y] of parse('155,560 232,433 366,440 783,598 798,591 856,605 934,482 1078,440 1553,488 1574,410 1589,371 1640,281 1789,412'))
  add(main, 'path', { d: `M${x - 4} ${y + 1}l4-5 4 5h-2v4h-4v-4z`, fill: '#00e600' });
for (const [x, y] of parse('420,433 1510,556 1616,399')) add(main, 'circle', { cx: x, cy: y, r: 4, fill: '#800080' });

line(main, 49, 774, 1852, 774, '#fff', 1, { opacity: .8 });
lv(626.5, '#00ff00', 7, 49, 1863);
rect(main, 1862, 77, 1865, 893, '#e8190c');
rect(main, 48, 77, 49, 895, '#999');
rect(main, 1866, 77, 1867, 895, '#999');
rect(main, 52, 82, 57, 87, '#888');
line(main, 696.5, 77, 696.5, 895, '#f00000');
text(main, 1458, 129, '최고 5,160 (-4,26%, 14:18)', 'red');
text(main, 122, 849, '최저 4,625 (6,81%, 09:12)', 'blue');
text(main, 1708, 408, '피봇1차저항선 4,987 (8,34%)', 'pink');
text(main, 1738, 644, '당일시가 4,790 (4,70%)', 'green');
for (const [x, y] of parse('1576,246 1574,342 1572,363')) text(main, x, y, '2', 'red small day');

// volume pane
background(vol, 895, 1038, [936, 969, 1003]);
const money = parse('49,1000 55,970 59,958 67,962 73,955 80,935 85,921 92,935 100,952 106,970 112,987 120,985 130,972 135,967 145,978 152,986 165,987 170,997 178,990 186,996 200,990 215,990 225,984 240,981 250,1002 270,1004 300,1003 318,1006 330,1012 343,1014 354,1012 362,1000 371,995 385,1000 396,1000 405,990 418,992 429,989 457,991 465,1003 480,1000 500,1002 531,1003 534,1007 545,1010 560,1009 590,1007 612,1006 660,1011 700,1007 760,1008 830,1002 882,1002 912,992 980,988 1029,986 1127,981 1176,984 1347,981 1440,983 1523,980 1573,976 1579,965 1588,975 1600,966 1617,976 1622,967 1631,947 1637,958 1650,956 1657,977 1673,985 1678,1000 1687,1007 1717,1003 1740,1004 1753,1001 1777,1002 1787,999 1807,1001 1840,1002 1852,1005');
curve(vol, '49,1035 70,1027 98,1018 123,1011 163,1002 200,997 241,994 354,994 400,993 457,991 500,990 531,991 560,996 612,1001 698,1004 784,1005 882,1005 980,1003 1102,994 1224,988 1347,986 1440,986 1540,983 1607,981 1653,979 1680,979 1730,982 1790,985 1852,987', '#00ff00', 5);
for (let x = 49; x < 1852; x++) {
  const y = at(money, x)[0];
  const k = x < 120 ? 9 : x < 250 ? 6 : x > 1570 && x < 1690 ? 7 : 2;
  line(vol, x + .5, y - rnd() * k, x + .5, y + rnd() * k * .9, '#ff0000');
}
add(vol, 'polygon', { points: '49,1005 50,958 53,955 54,960 57,948 59,958 64,960 68,945 72,952 76,935 77,908 79,925 82,925 84,940 70,965 55,972', fill: '#ff0000' });
add(vol, 'polygon', { points: '1573,976 1576,958 1578,948 1580,950 1580,990 1578,970', fill: '#ff0000' });
add(vol, 'polygon', { points: '1619,973 1620,945 1622,938 1625,938 1628,950 1624,966', fill: '#ff0000' });
for (const [x, a, b] of parse('127,960,985 132,962,975 174,980,995 218,974,988 238,976,984 399,985,998 354,998,1012 533,1003,1014 108,985,998 168,995,1004'))
  line(vol, x + .5, a, x + .5, b, '#ff0000', 2);
curve(vol, '49,1007 60,980 75,955 88,937 98,933 104,945 114,970 125,982 141,974 150,976 170,990 186,994 213,990 241,984 255,992 269,1002 300,1003 325,1007 343,1014 355,1013 372,1002 396,999 420,992 457,991 475,999 531,1003 560,1009 612,1007 700,1008 780,1008 880,1004 912,995 980,990 1127,983 1440,983 1523,981 1573,976 1600,970 1617,972 1640,957 1648,954 1660,962 1673,977 1685,995 1695,1004 1740,1003 1852,1004', '#993300', 3);
curve(vol, join(money), '#0000ff', 2);
curve(vol, '85,922 95,940 102,955 108,975', '#0000ff', 4);
curve(vol, '1653,962 1658,976', '#0000ff', 4);
curve(vol, '1673,985 1679,1000', '#0000ff', 4);
line(vol, 49, 932.5, 1866, 932.5, '#f00000');
line(vol, 696.5, 895, 696.5, 1038, '#f00000');
rect(vol, 48, 895, 49, 1038, '#999');
rect(vol, 1866, 895, 1867, 1038, '#999');

// price axes
const L = $('left'), R = $('right'), LL = $('leftLow'), RL = $('rightLow');
[[144, '5,140'], [199, '5,100'], [254, '5,060'], [308, '5,021'], [363, '4,981'], [472, '4,902'], [526, '4,862'], [581, '4,823'], [635, '4,783'], [690, '4,743'], [744, '4,704'], [799, '4,664'], [853, '4,625']].forEach(([y, s]) => text(L, 18, y + 5, s, 'small'));
add(L, 'path', { d: 'M13 97h12v12H13zM15 100h8M15 103h8M15 106h8M17 100v7M21 100v7', fill: 'none', stroke: '#333', 'shape-rendering': 'crispEdges' });
text(L, 11, 435, '7,98%', 'red small');
rect(L, 10, 413, 44, 426, '#e8190c');
text(L, 12, 424, '4,940', 'white');
for (let i = 0; i < 43; i++) line(R, 1867, 110.5 + i * 19.05, 1869, 110.5 + i * 19.05, '#999');
['70,00', '65,00', '60,00', '55,00', '50,00', '45,00', '40,00', '35,00', '30,00'].forEach((s, i) => {
  line(R, 1867, 110.5 + i * 95.2, 1873, 110.5 + i * 95.2, '#999');
  text(R, 1874, 114 + Math.round(i * 95.2), s);
});
text(R, 1867, 89, 'LC:6,81', 'red');
text(R, 1867, 101, 'HC:-4,26', 'sky');
rect(R, 1871, 413, 1911, 426, '#e8190c');
text(R, 1875, 424, '4,940', 'white');
text(R, 1875, 436, '7,98%', 'red small');
for (let y = 911; y < 1010; y += 7) {
  line(LL, 46, y + .5, 48, y + .5, '#999');
  line(RL, 1867, y + .5, 1869, y + .5, '#999');
}
for (const [p, x] of [[LL, 7], [RL, 1875]]) {
  text(p, x, 973, '2,000K', 'small');
  text(p, x, 1007, '1,500K', 'small');
}
add(LL, 'rect', { x: 8.5, y: 924.5, width: 36, height: 16, fill: '#ffdd77', stroke: '#000' });
text(LL, 9, 936, '2,553K', 'small');
add(RL, 'rect', { x: 1870.5, y: 924.5, width: 41, height: 16, fill: '#ffdd77', stroke: '#000' });
text(RL, 1873, 936, '2,553K', 'small');
rect(RL, 1903, 899, 1911, 906, '#444');
add(RL, 'path', { d: 'M1905 901l4 4M1909 901l-4 4', stroke: '#fff' });

// time axis
const T = $('times');
line(T, 7, 1038.5, 1914, 1038.5, '#999');
line(T, 7, 1056.5, 1914, 1056.5, '#999');
line(T, 48.5, 1038, 48.5, 1056, '#999');
text(T, 51, 1051, '11/25', 'day');
GRID.forEach((x, i) => {
  line(T, x + .5, 1038, x + .5, 1056, '#999');
  const m = (i + 1) * 10;
  let label = String(9 + Math.floor(m / 60)).padStart(2, '0') + ':' + String(m % 60).padStart(2, '0');
  // the cursor box hides these
  if (label === '11:00' || label === '11:10' || i > 34) return;
  if (label === '10:50') label = '10:';
  text(T, x + 2, 1051, label, 'small');
});
line(T, 1866.5, 1038, 1866.5, 1056, '#999');
text(T, 1875, 1051, '15:03:3');
add(T, 'rect', { x: 628.5, y: 1039.5, width: 135, height: 16, fill: '#ffdd77', stroke: '#000' });
text(T, 630, 1051, '2025/11/25(화) 11:06:30');
```
